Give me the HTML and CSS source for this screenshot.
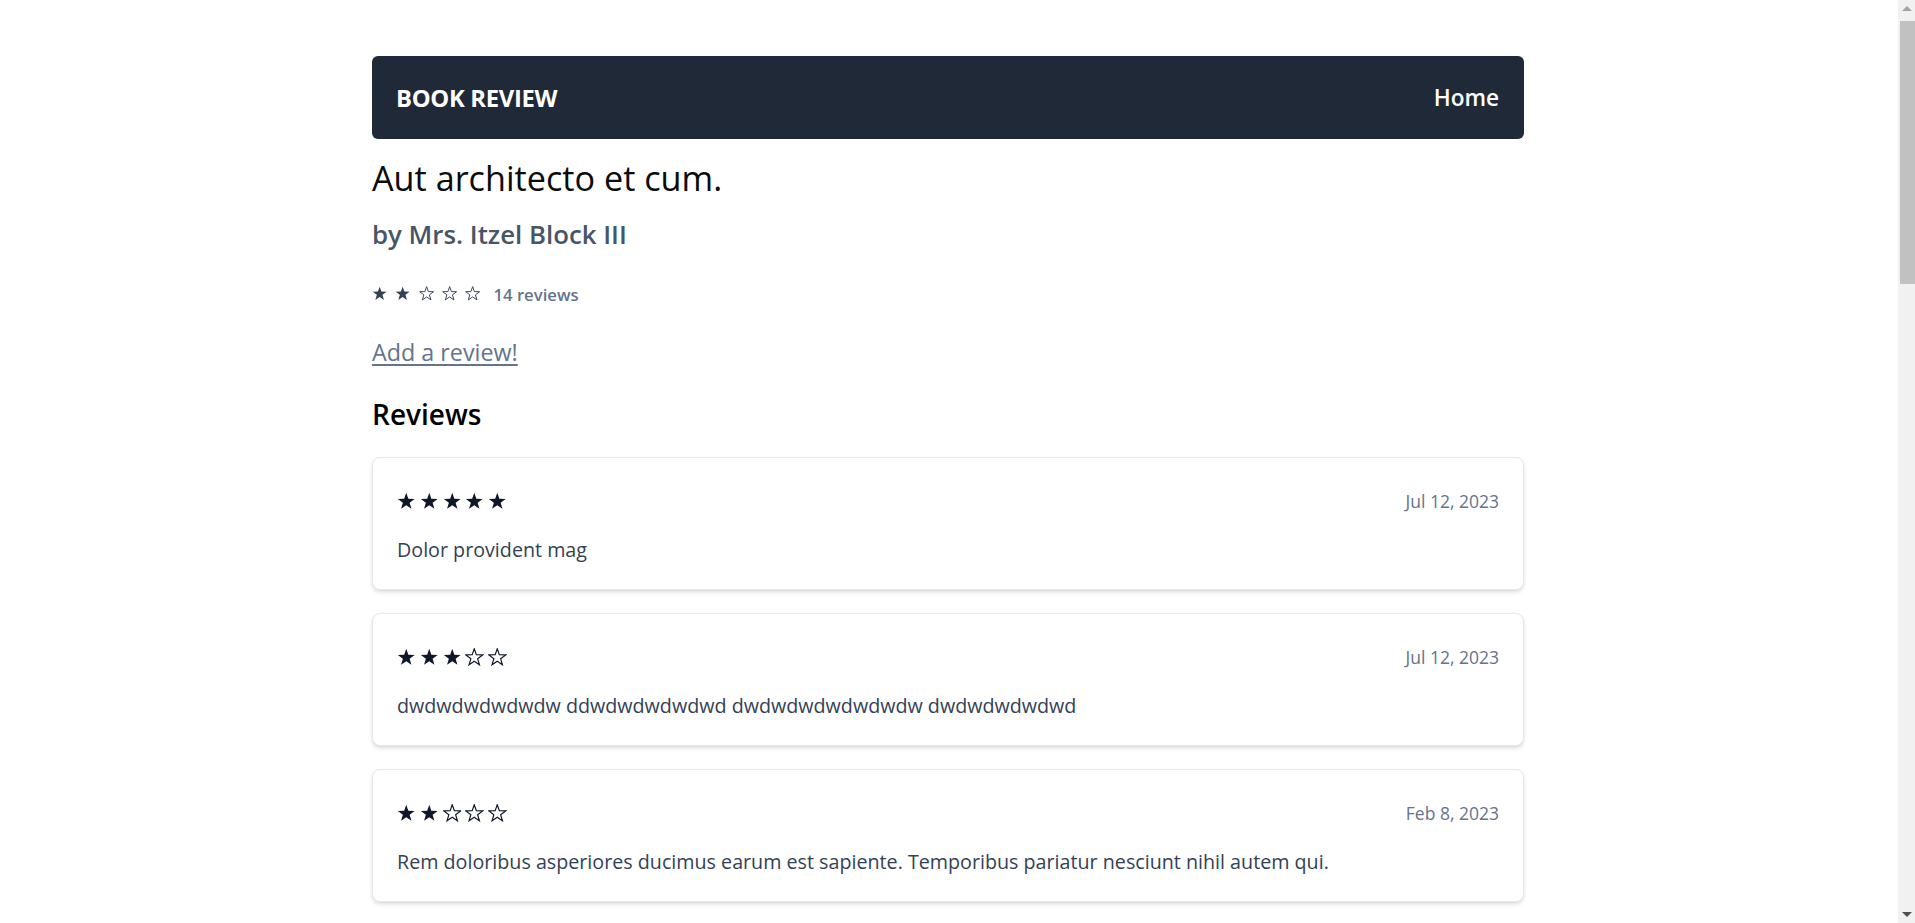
FILE: index.html
```html
<!DOCTYPE html>
<html lang="en">
<head>
<meta charset="utf-8">
<title>Book Review</title>
<link rel="stylesheet" href="styles.css">
</head>
<body>
<svg class="defs" width="0" height="0" aria-hidden="true">
  <defs>
    <polygon id="star" points="12,1 14.7,8.78 22.94,8.95 16.37,13.92 18.76,21.8 12,17.1 5.24,21.8 7.63,13.92 1.06,8.95 9.3,8.78"/>
  </defs>
</svg>
<div class="page">
  <nav class="navbar">
    <a class="brand" href="#">BOOK REVIEW</a>
    <a class="nav-link" href="#">Home</a>
  </nav>

  <h1 class="book-title">Aut architecto et cum.</h1>
  <h2 class="book-author">by Mrs. Itzel Block III</h2>

  <div class="rating-summary">
    <span class="stars stars-sm">
      <svg class="star full" viewBox="0 0 24 24"><use href="#star"/></svg>
      <svg class="star full" viewBox="0 0 24 24"><use href="#star"/></svg>
      <svg class="star empty" viewBox="0 0 24 24"><use href="#star"/></svg>
      <svg class="star empty" viewBox="0 0 24 24"><use href="#star"/></svg>
      <svg class="star empty" viewBox="0 0 24 24"><use href="#star"/></svg>
    </span>
    <span class="review-count">14 reviews</span>
  </div>

  <a class="add-review" href="#">Add a review!</a>

  <h2 class="section-title">Reviews</h2>

  <ul class="review-list">
    <li class="review-card">
      <div class="review-head">
        <span class="stars">
          <svg class="star full" viewBox="0 0 24 24"><use href="#star"/></svg>
          <svg class="star full" viewBox="0 0 24 24"><use href="#star"/></svg>
          <svg class="star full" viewBox="0 0 24 24"><use href="#star"/></svg>
          <svg class="star full" viewBox="0 0 24 24"><use href="#star"/></svg>
          <svg class="star full" viewBox="0 0 24 24"><use href="#star"/></svg>
        </span>
        <time class="review-date">Jul 12, 2023</time>
      </div>
      <p class="review-text">Dolor provident mag</p>
    </li>
    <li class="review-card">
      <div class="review-head">
        <span class="stars">
          <svg class="star full" viewBox="0 0 24 24"><use href="#star"/></svg>
          <svg class="star full" viewBox="0 0 24 24"><use href="#star"/></svg>
          <svg class="star full" viewBox="0 0 24 24"><use href="#star"/></svg>
          <svg class="star empty" viewBox="0 0 24 24"><use href="#star"/></svg>
          <svg class="star empty" viewBox="0 0 24 24"><use href="#star"/></svg>
        </span>
        <time class="review-date">Jul 12, 2023</time>
      </div>
      <p class="review-text">dwdwdwdwdwdw ddwdwdwdwdwd dwdwdwdwdwdwdw dwdwdwdwdwd</p>
    </li>
    <li class="review-card">
      <div class="review-head">
        <span class="stars">
          <svg class="star full" viewBox="0 0 24 24"><use href="#star"/></svg>
          <svg class="star full" viewBox="0 0 24 24"><use href="#star"/></svg>
          <svg class="star empty" viewBox="0 0 24 24"><use href="#star"/></svg>
          <svg class="star empty" viewBox="0 0 24 24"><use href="#star"/></svg>
          <svg class="star empty" viewBox="0 0 24 24"><use href="#star"/></svg>
        </span>
        <time class="review-date">Feb 8, 2023</time>
      </div>
      <p class="review-text">Rem doloribus asperiores ducimus earum est sapiente. Temporibus pariatur nesciunt nihil autem qui.</p>
    </li>
    <li class="review-card">
      <div class="review-head">
        <span class="stars">
          <svg class="star full" viewBox="0 0 24 24"><use href="#star"/></svg>
          <svg class="star empty" viewBox="0 0 24 24"><use href="#star"/></svg>
          <svg class="star empty" viewBox="0 0 24 24"><use href="#star"/></svg>
          <svg class="star empty" viewBox="0 0 24 24"><use href="#star"/></svg>
          <svg class="star empty" viewBox="0 0 24 24"><use href="#star"/></svg>
        </span>
        <time class="review-date">Jan 21, 2023</time>
      </div>
      <p class="review-text">Quia et voluptas ipsam sed. Magni quo ut dolorem aut accusamus voluptatem.</p>
    </li>
    <li class="review-card">
      <div class="review-head">
        <span class="stars">
          <svg class="star full" viewBox="0 0 24 24"><use href="#star"/></svg>
          <svg class="star full" viewBox="0 0 24 24"><use href="#star"/></svg>
          <svg class="star empty" viewBox="0 0 24 24"><use href="#star"/></svg>
          <svg class="star empty" viewBox="0 0 24 24"><use href="#star"/></svg>
          <svg class="star empty" viewBox="0 0 24 24"><use href="#star"/></svg>
        </span>
        <time class="review-date">Dec 3, 2022</time>
      </div>
      <p class="review-text">Et eum voluptatibus sint qui. Nihil sunt dolorum et facilis quis.</p>
    </li>
    <li class="review-card">
      <div class="review-head">
        <span class="stars">
          <svg class="star full" viewBox="0 0 24 24"><use href="#star"/></svg>
          <svg class="star empty" viewBox="0 0 24 24"><use href="#star"/></svg>
          <svg class="star empty" viewBox="0 0 24 24"><use href="#star"/></svg>
          <svg class="star empty" viewBox="0 0 24 24"><use href="#star"/></svg>
          <svg class="star empty" viewBox="0 0 24 24"><use href="#star"/></svg>
        </span>
        <time class="review-date">Nov 17, 2022</time>
      </div>
      <p class="review-text">Occaecati nam aut cum voluptatem. Ea dolores in adipisci.</p>
    </li>
    <li class="review-card">
      <div class="review-head">
        <span class="stars">
          <svg class="star full" viewBox="0 0 24 24"><use href="#star"/></svg>
          <svg class="star full" viewBox="0 0 24 24"><use href="#star"/></svg>
          <svg class="star full" viewBox="0 0 24 24"><use href="#star"/></svg>
          <svg class="star empty" viewBox="0 0 24 24"><use href="#star"/></svg>
          <svg class="star empty" viewBox="0 0 24 24"><use href="#star"/></svg>
        </span>
        <time class="review-date">Oct 29, 2022</time>
      </div>
      <p class="review-text">Aspernatur est ratione quia. Dolorem rerum qui maiores.</p>
    </li>
    <li class="review-card">
      <div class="review-head">
        <span class="stars">
          <svg class="star full" viewBox="0 0 24 24"><use href="#star"/></svg>
          <svg class="star full" viewBox="0 0 24 24"><use href="#star"/></svg>
          <svg class="star empty" viewBox="0 0 24 24"><use href="#star"/></svg>
          <svg class="star empty" viewBox="0 0 24 24"><use href="#star"/></svg>
          <svg class="star empty" viewBox="0 0 24 24"><use href="#star"/></svg>
        </span>
        <time class="review-date">Sep 14, 2022</time>
      </div>
      <p class="review-text">Velit ut quia voluptatem ut. Iure ut eveniet quos.</p>
    </li>
    <li class="review-card">
      <div class="review-head">
        <span class="stars">
          <svg class="star full" viewBox="0 0 24 24"><use href="#star"/></svg>
          <svg class="star empty" viewBox="0 0 24 24"><use href="#star"/></svg>
          <svg class="star empty" viewBox="0 0 24 24"><use href="#star"/></svg>
          <svg class="star empty" viewBox="0 0 24 24"><use href="#star"/></svg>
          <svg class="star empty" viewBox="0 0 24 24"><use href="#star"/></svg>
        </span>
        <time class="review-date">Aug 2, 2022</time>
      </div>
      <p class="review-text">Consequatur fugit sit aut. Neque qui omnis eos.</p>
    </li>
    <li class="review-card">
      <div class="review-head">
        <span class="stars">
          <svg class="star full" viewBox="0 0 24 24"><use href="#star"/></svg>
          <svg class="star full" viewBox="0 0 24 24"><use href="#star"/></svg>
          <svg class="star empty" viewBox="0 0 24 24"><use href="#star"/></svg>
          <svg class="star empty" viewBox="0 0 24 24"><use href="#star"/></svg>
          <svg class="star empty" viewBox="0 0 24 24"><use href="#star"/></svg>
        </span>
        <time class="review-date">Jul 19, 2022</time>
      </div>
      <p class="review-text">Et tempora accusantium ut. Numquam ea quia quae.</p>
    </li>
    <li class="review-card">
      <div class="review-head">
        <span class="stars">
          <svg class="star full" viewBox="0 0 24 24"><use href="#star"/></svg>
          <svg class="star full" viewBox="0 0 24 24"><use href="#star"/></svg>
          <svg class="star empty" viewBox="0 0 24 24"><use href="#star"/></svg>
          <svg class="star empty" viewBox="0 0 24 24"><use href="#star"/></svg>
          <svg class="star empty" viewBox="0 0 24 24"><use href="#star"/></svg>
        </span>
        <time class="review-date">Jun 5, 2022</time>
      </div>
      <p class="review-text">Ipsa molestiae in quo. Modi dolor reiciendis qui.</p>
    </li>
    <li class="review-card">
      <div class="review-head">
        <span class="stars">
          <svg class="star full" viewBox="0 0 24 24"><use href="#star"/></svg>
          <svg class="star empty" viewBox="0 0 24 24"><use href="#star"/></svg>
          <svg class="star empty" viewBox="0 0 24 24"><use href="#star"/></svg>
          <svg class="star empty" viewBox="0 0 24 24"><use href="#star"/></svg>
          <svg class="star empty" viewBox="0 0 24 24"><use href="#star"/></svg>
        </span>
        <time class="review-date">May 23, 2022</time>
      </div>
      <p class="review-text">Laborum odit dolores et. Sit quaerat accusamus est.</p>
    </li>
    <li class="review-card">
      <div class="review-head">
        <span class="stars">
          <svg class="star full" viewBox="0 0 24 24"><use href="#star"/></svg>
          <svg class="star full" viewBox="0 0 24 24"><use href="#star"/></svg>
          <svg class="star empty" viewBox="0 0 24 24"><use href="#star"/></svg>
          <svg class="star empty" viewBox="0 0 24 24"><use href="#star"/></svg>
          <svg class="star empty" viewBox="0 0 24 24"><use href="#star"/></svg>
        </span>
        <time class="review-date">Apr 11, 2022</time>
      </div>
      <p class="review-text">Voluptas facere natus sed. Rerum nisi est ut.</p>
    </li>
    <li class="review-card">
      <div class="review-head">
        <span class="stars">
          <svg class="star full" viewBox="0 0 24 24"><use href="#star"/></svg>
          <svg class="star empty" viewBox="0 0 24 24"><use href="#star"/></svg>
          <svg class="star empty" viewBox="0 0 24 24"><use href="#star"/></svg>
          <svg class="star empty" viewBox="0 0 24 24"><use href="#star"/></svg>
          <svg class="star empty" viewBox="0 0 24 24"><use href="#star"/></svg>
        </span>
        <time class="review-date">Mar 2, 2022</time>
      </div>
      <p class="review-text">Quod ullam omnis ut. Aut quis sed consequatur.</p>
    </li>
  </ul>
</div>

<div class="scrollbar" aria-hidden="true">
  <span class="sb-arrow sb-up"></span>
  <span class="sb-thumb"></span>
  <span class="sb-arrow sb-down"></span>
</div>
</body>
</html>
```

FILE: styles.css
```css
html {
  background: #ffffff;
}

body {
  margin: 0;
  padding-right: 19px;
  font-family: "Open Sans", "Noto Sans", "Liberation Sans", sans-serif;
  color: #111111;
}

.defs {
  position: absolute;
  width: 0;
  height: 0;
  overflow: hidden;
}

.page {
  width: 1152px;
  margin: 56px auto 40px;
}

/* Navbar */
.navbar {
  display: flex;
  align-items: center;
  justify-content: space-between;
  height: 83px;
  padding: 0 25px 0 24px;
  box-sizing: border-box;
  background: #1f2937;
  border-radius: 6px;
}
.brand {
  color: #ffffff;
  font-weight: 700;
  font-size: 23.8px;
  text-decoration: none;
  letter-spacing: -0.3px;
}
.nav-link {
  color: #ffffff;
  font-weight: 600;
  font-size: 22.6px;
  text-decoration: none;
}

/* Book header */
.book-title {
  margin: 19px 0 0;
  font-size: 34.2px;
  line-height: 40px;
  font-weight: 400;
  color: #0b0b0b;
}
.book-author {
  margin: 20px 0 0;
  font-size: 25.8px;
  line-height: 32px;
  font-weight: 600;
  color: #475569;
}

.rating-summary {
  display: flex;
  align-items: center;
  height: 24px;
  margin-top: 32px;
}
.stars {
  display: flex;
  align-items: center;
  gap: 4.3px;
}
.star {
  display: block;
  width: 18.5px;
  height: 18.5px;
}
.star.full {
  fill: currentColor;
}
.star.empty {
  fill: none;
  stroke: currentColor;
  stroke-width: 1.5;
  stroke-linejoin: miter;
}
.stars-sm {
  gap: 8px;
  color: #334155;
}
.stars-sm .star {
  width: 15.3px;
  height: 15.3px;
}
.review-count {
  margin-left: 13px;
  font-size: 16.7px;
  font-weight: 600;
  color: #64748b;
}

.add-review {
  display: inline-block;
  margin-top: 32px;
  font-size: 23.3px;
  line-height: 28px;
  color: #64748b;
  text-decoration: underline;
  text-underline-offset: 3px;
  text-decoration-thickness: 1.5px;
}

.section-title {
  margin: 32px 0 0;
  font-size: 28px;
  line-height: 32px;
  font-weight: 600;
  color: #000000;
}

/* Reviews */
.review-list {
  list-style: none;
  margin: 27px 0 0;
  padding: 0;
  display: flex;
  flex-direction: column;
  gap: 23px;
}
.review-card {
  border: 1px solid #e5e7eb;
  border-radius: 8px;
  padding: 24px 24px 25px;
  background: #ffffff;
  box-shadow: 0 3px 5px -1px rgba(0, 0, 0, 0.12), 0 1px 3px rgba(0, 0, 0, 0.06);
}
.review-head {
  display: flex;
  align-items: center;
  justify-content: space-between;
  height: 38px;
  color: #0f172a;
}
.review-date {
  font-size: 17.5px;
  color: #64748b;
}
.review-text {
  margin: 15px 0 0;
  font-size: 19.7px;
  line-height: 29px;
  color: #334155;
}

/* Window scrollbar (drawn, the capture hides the native one) */
.scrollbar {
  position: fixed;
  top: 0;
  right: 0;
  bottom: 0;
  width: 17px;
  background: #f1f1f1;
}
.sb-thumb {
  position: absolute;
  top: 21px;
  left: 2px;
  right: 0;
  height: 263px;
  background: #c1c1c1;
}
.sb-arrow {
  position: absolute;
  left: 4px;
  width: 0;
  height: 0;
  border-left: 5px solid transparent;
  border-right: 5px solid transparent;
}
.sb-up {
  top: 6px;
  border-bottom: 5px solid #a3a3a3;
}
.sb-down {
  bottom: 6px;
  border-top: 5px solid #505050;
}
```
